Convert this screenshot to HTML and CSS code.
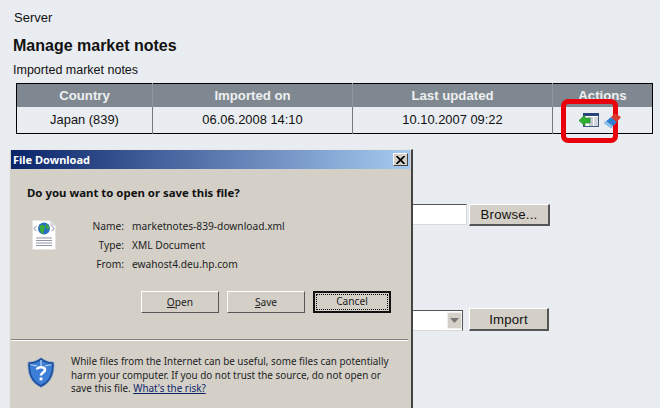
FILE: index.html
```html
<!DOCTYPE html>
<html lang="en">
<head>
<meta charset="utf-8">
<title>Manage market notes</title>
<link rel="stylesheet" href="styles.css">
</head>
<body>
<main class="page">
  <div class="crumb">Server</div>
  <h1 class="title">Manage market notes</h1>
  <div class="sub">Imported market notes</div>
  <table class="notes">
    <thead>
      <tr><th class="c1">Country</th><th class="c2">Imported on</th><th class="c3">Last updated</th><th class="c4">Actions</th></tr>
    </thead>
    <tbody>
      <tr>
        <td>Japan (839)</td>
        <td>06.06.2008 14:10</td>
        <td>10.10.2007 09:22</td>
        <td class="actions">
          <svg class="ico-download" width="20" height="15" viewBox="0 0 20 15">
            <rect x="4.5" y="0.5" width="15" height="13" fill="#fff" stroke="#3c5a80"/>
            <rect x="4" y="0" width="16" height="3" fill="#27457a"/>
            <rect x="10" y="4" width="4" height="9" fill="#c4c9cf"/>
            <rect x="15" y="4" width="4" height="9" fill="#d3d7db"/>
            <path d="M0 7.5 L6 2 V5 H11 V10 H6 V13 Z" fill="#2fb02f" stroke="#1d7d22" stroke-width="0.6"/>
          </svg>
          <svg class="ico-erase" width="18" height="16" viewBox="0 0 18 16">
            <path d="M0 10 L7 4 L13 9 L7 15 Z" fill="#2f7fd0"/>
            <path d="M7 4 L11 0.5 L17 4 L13 9 Z" fill="#d83a30"/>
            <path d="M0 10 L7 15 L9 13 L2 8 Z" fill="#8fc0ea"/>
          </svg>
        </td>
      </tr>
    </tbody>
  </table>

  <form class="row row-file">
    <div class="field"></div>
    <button type="button" class="web-btn browse">Browse...</button>
  </form>
  <form class="row row-select">
    <div class="field select"><span class="arrow"><svg width="9" height="5" viewBox="0 0 9 5"><path d="M0 0H9L4.5 5Z" fill="#777"/></svg></span></div>
    <button type="button" class="web-btn import">Import</button>
  </form>
</main>

<div class="highlight"></div>

<section class="dialog">
  <header class="titlebar">
    <span>File Download</span>
    <span class="close"><svg width="9" height="8" viewBox="0 0 9 8"><path d="M0.5 0L8.5 8M8.5 0L0.5 8" stroke="#000" stroke-width="1.7"/></svg></span>
  </header>
  <div class="body">
    <h2 class="question">Do you want to open or save this file?</h2>
    <div class="file">
      <svg class="doc" width="26" height="32" viewBox="0 0 26 32">
        <path d="M1.5 1.5H19L24.5 7V30.5H1.5Z" fill="#fff" stroke="#e6e4de"/>
        <path d="M19 1.5V7H24.5Z" fill="#d9d9e2"/>
        <path d="M5.5 7L2.8 9.5L5.5 12M20.5 7L23.2 9.5L20.5 12" fill="none" stroke="#7b8296" stroke-width="1"/>
        <circle cx="13" cy="9.5" r="6" fill="#2a6fc0"/>
        <path d="M9 6.5C11 5 13 6 14 7.5C14.5 9.5 12.5 10 13 12C13 14 11.5 15 10.5 14.5C9.5 12 8 10 9 6.5Z" fill="#3bab3c"/>
        <path d="M15 5C17.5 6 18.5 8 18.5 10L16 10C15 8.5 14.5 7 15 5Z" fill="#3bab3c"/>
        <path d="M5 19H21M5 21.5H21M5 24H21M5 26.5H21" stroke="#8f93a8" stroke-width="1"/>
      </svg>
      <dl class="meta">
        <dt>Name:</dt><dd>marketnotes-839-download.xml</dd>
        <dt>Type:</dt><dd>XML Document</dd>
        <dt>From:</dt><dd>ewahost4.deu.hp.com</dd>
      </dl>
    </div>
    <div class="buttons">
      <button type="button" class="win-btn"><u>O</u>pen</button>
      <button type="button" class="win-btn"><u>S</u>ave</button>
      <button type="button" class="win-btn default"><span class="focus">Cancel</span></button>
    </div>
    <hr class="sep">
    <div class="warn">
      <svg class="shield" width="28" height="31" viewBox="0 0 28 31">
        <path d="M14 0.5C18 3.5 22 5 27 5C28 17 24 26 14 30.5C4 26 0 17 1 5C6 5 10 3.5 14 0.5Z" fill="#1d4f9c" stroke="#a9bad0" stroke-width="0.8"/>
        <path d="M14 3C17.5 5.5 21 6.8 24.8 7C25.5 16 22.5 24 14 28C5.5 24 2.5 16 3.2 7C7 6.8 10.5 5.5 14 3Z" fill="#3d7fd6"/>
        <path d="M14 3V9M3.5 7.5L10 9M24.5 7.5L18 9" stroke="#b9d5f4" stroke-width="1.2"/>
        <path d="M10 12.5C10 9.5 18 9.5 18 12.8C18 15.5 14 15.5 14 18.5" fill="none" stroke="#fff" stroke-width="2.6"/>
        <rect x="12.6" y="20.5" width="2.8" height="2.8" fill="#fff"/>
      </svg>
      <p class="warn-text">While files from the Internet can be useful, some files can potentially<br>harm your computer. If you do not trust the source, do not open or<br>save this file. <a href="#">What's the risk?</a></p>
    </div>
  </div>
</section>
</body>
</html>
```
FILE: styles.css
```css
html, body {
  margin: 0;
  height: 100%;
  overflow: hidden;
}
body {
  background: #e9ecf0;
  color: #111;
  font-family: "Liberation Sans", Arial, sans-serif;
  position: relative;
}
.page {
  padding: 11px 8px 0 13px;
}
.crumb {
  font-size: 13px;
  line-height: 13px;
  padding-left: 1px;
}
.title {
  margin: 13px 0 0;
  font-size: 16px;
  line-height: 18px;
  font-weight: bold;
}
.sub {
  margin-top: 8px;
  font-size: 12.5px;
  line-height: 15px;
}
.notes {
  margin: 5px 0 0 3px;
  width: 636px;
  border-collapse: collapse;
  table-layout: fixed;
  border: 1px solid #000;
  font-size: 12.9px;
}
.notes th {
  box-sizing: border-box;
  height: 23px;
  padding: 0;
  background: #7f8890;
  color: #eef0f2;
  font-weight: bold;
  font-size: 13.2px;
  border-left: 1px solid #8f979e;
}
.notes th:first-child { border-left: 0; }
.notes td {
  box-sizing: border-box;
  height: 27px;
  padding: 0;
  text-align: center;
  border-left: 1px solid #777;
}
.notes td:first-child { border-left: 0; }
.c1 { width: 136px; }
.c2, .c3 { width: 200px; }
.c4 { width: 100px; }
.actions { white-space: nowrap; }
.actions svg {
  vertical-align: middle;
  position: relative;
  z-index: 1;
}
.ico-download { margin-left: -4px; margin-right: 1px; }
.ico-erase { top: 1px; }
.row {
  display: flex;
  justify-content: flex-end;
  gap: 2px;
  padding-right: 102px;
}
.row-file { margin-top: 70px; }
.row-select { margin-top: 82px; padding-right: 103px; }
.field {
  width: 300px;
  height: 19px;
  background: #fff;
  border-top: 1px solid #555;
  border-bottom: 1px solid #d8d8d8;
  border-right: 1px solid #d8d8d8;
}
.select {
  width: 300px;
  display: flex;
  justify-content: flex-end;
  align-items: center;
  margin-top: 2px;
  margin-right: 4px;
  border-top: 1px solid #555;
  border-right: 1px solid #555;
}
.arrow {
  width: 15px;
  height: 17px;
  background: #d4d0c8;
  border: 1px solid #f0f0f0;
  box-sizing: border-box;
  display: flex;
  align-items: center;
  justify-content: center;
}
.web-btn {
  width: 81px;
  height: 22px;
  padding: 0;
  background: #d4d0c8;
  color: #111;
  font: 13.2px "Liberation Sans", Arial, sans-serif;
  letter-spacing: 0.2px;
  border: 1px solid;
  border-color: #fff #555 #555 #fff;
  border-width: 1px 2px 2px 1px;
}
.import { height: 23px; width: 80px; }
.highlight {
  position: absolute;
  left: 561px;
  top: 99px;
  width: 47px;
  height: 34px;
  border: 5px solid #e8000a;
  border-radius: 7px;
}
.dialog {
  position: absolute;
  z-index: 2;
  left: 9px;
  top: 149px;
  width: 400px;
  height: 270px;
  background: #d4d0c8;
  border: 1px solid #e8e8e4;
  border-right: 2px solid #444;
  padding: 0 0 0 1px;
  font-family: "Noto Sans", Tahoma, sans-serif;
  font-size: 10.2px;
  color: #222;
}
.titlebar {
  height: 19px;
  margin-right: 1px;
  display: flex;
  align-items: center;
  justify-content: space-between;
  padding: 0 2px 0 2px;
  background: linear-gradient(90deg, #0a246a, #a6caf0);
  color: #fff;
  font-weight: bold;
  font-size: 11px;
}
.close {
  width: 15px;
  height: 13px;
  background: #d4d0c8;
  border: 1px solid;
  border-color: #fff #444 #444 #fff;
  box-sizing: border-box;
  display: flex;
  align-items: center;
  justify-content: center;
}
.body {
  padding: 0 3px 0 0;
}
.question {
  margin: 0;
  padding: 16px 0 0 16px;
  font-size: 11.4px;
  line-height: 15px;
  color: #111;
}
.file {
  display: flex;
  margin-top: 16px;
  padding-left: 20px;
}
.doc { margin-top: 3px; }
.meta {
  margin: 0;
  display: grid;
  grid-template-columns: 67px auto;
  column-gap: 8px;
  line-height: 19px;
  margin-top: 1px;
}
.meta dt { text-align: right; }
.meta dd { margin: 0; }
.buttons {
  display: flex;
  justify-content: flex-end;
  gap: 8px;
  padding-right: 17px;
  margin-top: 17px;
}
.win-btn {
  width: 78px;
  height: 22px;
  padding: 0;
  background: #d4d0c8;
  color: #222;
  font: 10.2px "Noto Sans", Tahoma, sans-serif;
  border: 1px solid;
  border-color: #fff #555 #555 #fff;
}
.default {
  border: 2px solid #111;
  padding: 1px;
}
.focus {
  display: block;
  height: 100%;
  line-height: 13px;
  border: 1px dotted #000;
  box-sizing: border-box;
}
.sep {
  margin: 26px 0 0 0;
  border: 0;
  border-top: 1px solid #808080;
  border-bottom: 1px solid #fff;
}
.warn {
  display: flex;
  margin-top: 14px;
  padding-left: 16px;
}
.shield { flex: none; margin-top: 2px; }
.warn-text {
  margin: 0 0 0 16px;
  white-space: nowrap;
  font-size: 9.9px;
  line-height: 13.5px;
}
.warn-text a { color: #0a246a; }
```
